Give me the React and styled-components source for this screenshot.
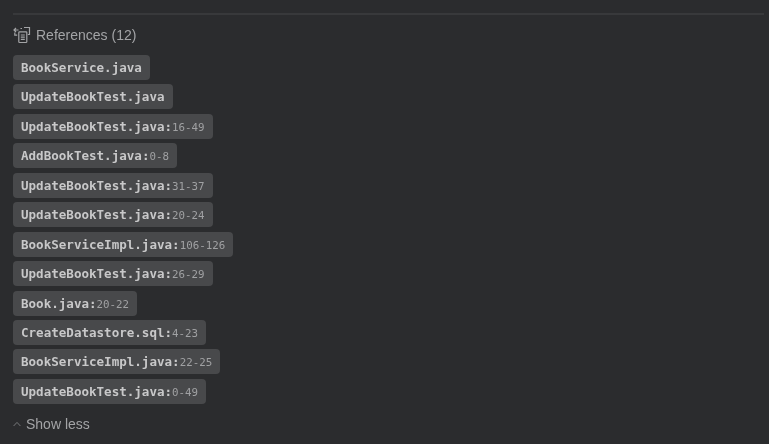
import React from "react";
import styled, { createGlobalStyle } from "styled-components";

const GlobalStyle = createGlobalStyle`
  html, body {
    margin: 0;
    padding: 0;
    background: #2b2c2e;
  }
`;

const Page = styled.div`
  width: 769px;
  height: 444px;
  box-sizing: border-box;
  overflow: hidden;
  padding: 13px 5px 0 13px;
  background: #2b2c2e;
  font-family: "Liberation Sans", Arial, sans-serif;
  filter: blur(0.45px);
`;

const Divider = styled.div`
  height: 2px;
  background: #38393b;
`;

const Header = styled.div`
  display: flex;
  align-items: center;
  gap: 5px;
  height: 20px;
  margin-top: 10px;
  color: #a3a4a6;
  font-size: 14px;
  line-height: 20px;
`;

const List = styled.div`
  display: flex;
  flex-direction: column;
  align-items: flex-start;
  gap: 4.45px;
  margin-top: 10px;
`;

const Chip = styled.div`
  display: flex;
  align-items: baseline;
  box-sizing: border-box;
  height: 25px;
  padding: 0 8px;
  border-radius: 4px;
  background: #48494b;
  color: #c8c8c9;
  font-family: "DejaVu Sans Mono", "Liberation Mono", monospace;
  font-size: 12.55px;
  font-weight: 700;
  line-height: 25px;
  white-space: nowrap;
`;

const Lines = styled.span`
  color: #a0a1a3;
  font-size: 10.8px;
  font-weight: 400;
`;

const Toggle = styled.div`
  display: flex;
  align-items: center;
  gap: 5px;
  height: 20px;
  margin-top: 10px;
  color: #a3a4a6;
  font-size: 14px;
  line-height: 20px;
`;

const refs = [
  ["BookService.java"],
  ["UpdateBookTest.java"],
  ["UpdateBookTest.java", "16-49"],
  ["AddBookTest.java", "0-8"],
  ["UpdateBookTest.java", "31-37"],
  ["UpdateBookTest.java", "20-24"],
  ["BookServiceImpl.java", "106-126"],
  ["UpdateBookTest.java", "26-29"],
  ["Book.java", "20-22"],
  ["CreateDatastore.sql", "4-23"],
  ["BookServiceImpl.java", "22-25"],
  ["UpdateBookTest.java", "0-49"],
];

const ReferencesIcon = () => (
  <svg width="18" height="18" viewBox="0 0 18 18" fill="none" stroke="#a3a4a6" strokeWidth="1.2">
    <path d="M1 4h4.5M3 2L1 4l2 2" />
    <path d="M1.8 6.5v2.7h2.4" />
    <path d="M7.5 2.5h1.5M11 1.5h5.5v7h-1.7" />
    <rect x="5.8" y="5.8" width="8" height="10.7" rx="0.8" />
    <path d="M7.8 9h4M7.8 11.2h4M7.8 13.4h4" />
  </svg>
);

const ChevronUp = () => (
  <svg width="8" height="6" viewBox="0 0 8 6" fill="none" stroke="#77787a" strokeWidth="1">
    <path d="M0.6 5L4 1.4 7.4 5" />
  </svg>
);

export default function App() {
  return (
    <>
      <GlobalStyle />
      <Page>
        <Divider />
        <Header>
          <ReferencesIcon />
          References (12)
        </Header>
        <List>
          {refs.map(([file, lines], i) => (
            <Chip key={i}>
              {file}
              {lines && (
                <>
                  :<Lines>{lines}</Lines>
                </>
              )}
            </Chip>
          ))}
        </List>
        <Toggle>
          <ChevronUp />
          Show less
        </Toggle>
      </Page>
    </>
  );
}
